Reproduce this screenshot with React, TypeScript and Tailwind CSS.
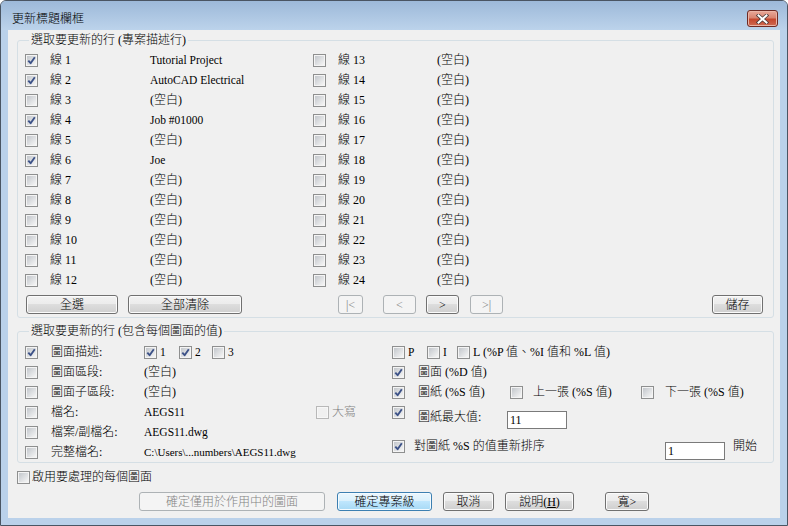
import type { ReactNode } from "react";

const FONT = "font-['Liberation_Serif','Noto_Sans_CJK_TC',serif]";

type Line = { label: string; value: string; checked?: boolean };

const leftLines: Line[] = [
  { label: "線 1", value: "Tutorial Project", checked: true },
  { label: "線 2", value: "AutoCAD Electrical", checked: true },
  { label: "線 3", value: "(空白)" },
  { label: "線 4", value: "Job #01000", checked: true },
  { label: "線 5", value: "(空白)" },
  { label: "線 6", value: "Joe", checked: true },
  { label: "線 7", value: "(空白)" },
  { label: "線 8", value: "(空白)" },
  { label: "線 9", value: "(空白)" },
  { label: "線 10", value: "(空白)" },
  { label: "線 11", value: "(空白)" },
  { label: "線 12", value: "(空白)" },
];

const rightLines: Line[] = Array.from({ length: 12 }, (_, i) => ({
  label: `線 ${i + 13}`,
  value: "(空白)",
}));

/** Win7 style 13px checkbox. */
function Check(props: { checked?: boolean; disabled?: boolean }) {
  return (
    <span
      className={
        props.disabled
          ? "inline-flex size-[13px] shrink-0 items-center justify-center border border-[#b8b8b8] bg-[#f7f7f7]"
          : "inline-flex size-[13px] shrink-0 items-center justify-center border border-[#8e8f8f] bg-[#f4f4f4]"
      }
    >
      <span
        className={
          props.disabled
            ? "flex size-[9px] items-center justify-center bg-[#f0f0f0]"
            : "flex size-[9px] items-center justify-center bg-gradient-to-br from-[#c3c7cc] to-[#f6f6f6]"
        }
      >
        {props.checked && (
          <svg width="9" height="9" viewBox="0 0 9 9" className="overflow-visible">
            <path
              d="M1.3 4.6 L3.6 7.2 L7.8 1.2"
              fill="none"
              stroke="#3d5288"
              strokeWidth="1.9"
              strokeLinejoin="round"
            />
          </svg>
        )}
      </span>
    </span>
  );
}

function Btn(props: {
  w: string;
  children: ReactNode;
  disabled?: boolean;
  primary?: boolean;
  className?: string;
}) {
  const look = props.disabled
    ? "border-[#adb2b5] bg-[#f4f4f4] text-[#838383]"
    : props.primary
      ? "border-[#3c7fb1] bg-[linear-gradient(#eaf6fd_0%,#d9f0fc_50%,#bee6fd_50%,#a7d9f5_100%)] shadow-[inset_0_0_0_1px_#f4fbff]"
      : "border-[#707070] bg-[linear-gradient(#f2f2f2_0%,#ebebeb_50%,#dddddd_50%,#cfcfcf_100%)] shadow-[inset_0_0_0_1px_#fbfbfb]";
  return (
    <button
      type="button"
      className={`flex h-[19px] shrink-0 items-center justify-center rounded-[3px] border text-[12px] leading-none ${look} ${props.w} ${props.className ?? ""}`}
    >
      {props.children}
    </button>
  );
}

function LineRow(props: { line: Line; labelW: string }) {
  const latin = !props.line.value.startsWith("(");
  return (
    <div className="flex h-[20px] items-center">
      <Check checked={props.line.checked} />
      <span className={`ml-[12px] ${props.labelW}`}>{props.line.label}</span>
      <span className={latin ? "text-[11.5px]" : ""}>{props.line.value}</span>
    </div>
  );
}

function FieldRow(props: { label: string; checked?: boolean; children: ReactNode }) {
  return (
    <div className="flex h-[20px] items-center">
      <Check checked={props.checked} />
      <span className="ml-[13px] w-[93px]">{props.label}</span>
      {props.children}
    </div>
  );
}

export default function App() {
  return (
    <div className={`h-[526px] w-[788px] bg-white text-[12px] font-light leading-[16px] text-black ${FONT}`}>
      <div className="flex h-full w-full flex-col rounded-t-[6px] border border-[#4a5563] bg-[#bad1ea]">
        {/* Title bar */}
        <div className="flex h-[29px] shrink-0 items-start justify-between rounded-t-[5px] bg-gradient-to-b from-[#9db9d9] to-[#bcd3eb] pl-[11px] pr-[9px]">
          <span className="pt-[10px] text-[12px] leading-[16px]">更新標題欄框</span>
          <button
            type="button"
            aria-label="Close"
            className="mt-[9px] flex h-[17px] w-[31px] items-center justify-center rounded-[3px] border border-[#6e2a24] bg-[linear-gradient(#e9a99a_0%,#d98470_45%,#c5472e_55%,#cf6a52_100%)] shadow-[inset_0_0_0_1px_#eab4a6]"
          >
            <svg width="13" height="10" viewBox="0 0 13 10">
              <path d="M2.5 1.5 L10.5 8.5 M10.5 1.5 L2.5 8.5" stroke="#4a3a3a" strokeWidth="3.6" strokeLinecap="square" />
              <path d="M2.5 1.5 L10.5 8.5 M10.5 1.5 L2.5 8.5" stroke="#ffffff" strokeWidth="2" strokeLinecap="square" />
            </svg>
          </button>
        </div>

        {/* Client area */}
        <div className="mx-[7px] flex h-[488px] w-[772px] flex-col bg-[#f0f0f0] pl-[9px] pt-[2px]">
          {/* Group 1 */}
          <fieldset className="w-[757px] rounded-[3px] border border-[#d5dfe5] pb-[3px] pl-[7px] pt-[2px]">
            <legend className="ml-[4px] px-[2px] leading-[16px]">選取要更新的行 (專案描述行)</legend>
            <div className="flex">
              <div className="flex w-[288px] flex-col">
                {leftLines.map((l) => (
                  <LineRow key={l.label} line={l} labelW="w-[100px]" />
                ))}
              </div>
              <div className="flex flex-col">
                {rightLines.map((l) => (
                  <LineRow key={l.label} line={l} labelW="w-[99px]" />
                ))}
              </div>
            </div>
            <div className="mt-[5px] flex">
              <Btn w="w-[92px]" className="ml-[1px]">全選</Btn>
              <Btn w="w-[114px]" className="ml-[10px]">全部清除</Btn>
              <Btn w="w-[25px]" className="ml-[96px] text-[10px]" disabled>|&lt;</Btn>
              <Btn w="w-[33px]" className="ml-[20px] text-[10px]" disabled>&lt;</Btn>
              <Btn w="w-[33px]" className="ml-[10px] text-[10px]">&gt;</Btn>
              <Btn w="w-[33px]" className="ml-[11px] text-[10px]" disabled>&gt;|</Btn>
              <Btn w="w-[51px]" className="ml-[209px]">儲存</Btn>
            </div>
          </fieldset>

          {/* Group 2 */}
          <fieldset className="mt-[5px] w-[757px] rounded-[3px] border border-[#d5dfe5] pl-[7px] pt-[3px]">
            <legend className="ml-[4px] px-[2px] leading-[16px]">選取要更新的行 (包含每個圖面的值)</legend>
            <div className="flex">
              <div className="flex w-[367px] flex-col">
                <FieldRow label="圖面描述:" checked>
                  <span className="flex w-[35px] items-center">
                    <Check checked />
                    <span className="ml-[3px] text-[11.5px]">1</span>
                  </span>
                  <span className="flex w-[33px] items-center">
                    <Check checked />
                    <span className="ml-[3px] text-[11.5px]">2</span>
                  </span>
                  <span className="flex items-center">
                    <Check />
                    <span className="ml-[3px] text-[11.5px]">3</span>
                  </span>
                </FieldRow>
                <FieldRow label="圖面區段:">
                  <span>(空白)</span>
                </FieldRow>
                <FieldRow label="圖面子區段:">
                  <span>(空白)</span>
                </FieldRow>
                <FieldRow label="檔名:">
                  <span className="w-[172px] text-[11.5px]">AEGS11</span>
                  <Check disabled />
                  <span className="ml-[3px] text-[#838383]">大寫</span>
                </FieldRow>
                <FieldRow label="檔案/副檔名:">
                  <span className="text-[11.5px]">AEGS11.dwg</span>
                </FieldRow>
                <FieldRow label="完整檔名:">
                  <span className="text-[11px]">C:\Users\...numbers\AEGS11.dwg</span>
                </FieldRow>
              </div>

              <div className="flex flex-col">
                <div className="flex h-[20px] items-center">
                  <span className="flex w-[35px] items-center">
                    <Check />
                    <span className="ml-[3px] text-[11.5px]">P</span>
                  </span>
                  <span className="flex w-[30px] items-center">
                    <Check />
                    <span className="ml-[3px] text-[11.5px]">I</span>
                  </span>
                  <span className="flex items-center">
                    <Check />
                    <span className="ml-[3px]">L (%P 值、%I 值和 %L 值)</span>
                  </span>
                </div>
                <div className="flex h-[20px] items-center">
                  <Check checked />
                  <span className="ml-[13px]">圖面 (%D 值)</span>
                </div>
                <div className="flex h-[20px] items-center">
                  <Check checked />
                  <span className="ml-[13px] w-[92px]">圖紙 (%S 值)</span>
                  <Check />
                  <span className="ml-[10px] w-[108px]">上一張 (%S 值)</span>
                  <Check />
                  <span className="ml-[11px]">下一張 (%S 值)</span>
                </div>
                <div className="flex h-[28px] items-start">
                  <span className="mt-[4px] flex">
                    <Check checked />
                  </span>
                  <span className="ml-[13px] mt-[7px] w-[89px]">圖紙最大值:</span>
                  <input
                    readOnly
                    defaultValue="11"
                    className="mt-[9px] h-[18px] w-[60px] border border-[#7a7a7a] bg-white pl-[2px] text-[12px] leading-[16px] outline-none"
                  />
                </div>
                <div className="flex h-[32px] items-start">
                  <span className="mt-[10px] flex">
                    <Check checked />
                  </span>
                  <span className="ml-[9px] mt-[8px] w-[251px]">對圖紙 %S 的值重新排序</span>
                  <input
                    readOnly
                    defaultValue="1"
                    className="mt-[12px] h-[18px] w-[60px] border border-[#7a7a7a] bg-white pl-[2px] text-[12px] leading-[16px] outline-none"
                  />
                  <span className="ml-[8px] mt-[8px]">開始</span>
                </div>
              </div>
            </div>
          </fieldset>

          <div className="mt-[4px] flex h-[20px] items-center">
            <Check />
            <span className="ml-[2px]">啟用要處理的每個圖面</span>
          </div>

          <div className="mt-[5px] flex">
            <Btn w="w-[186px]" className="ml-[122px]" disabled>確定僅用於作用中的圖面</Btn>
            <Btn w="w-[95px]" className="ml-[12px]" primary>確定專案級</Btn>
            <Btn w="w-[51px]" className="ml-[11px]">取消</Btn>
            <Btn w="w-[69px]" className="ml-[11px]">
              說明(<span className="underline">H</span>)
            </Btn>
            <Btn w="w-[44px]" className="ml-[31px]">寬&gt;</Btn>
          </div>
        </div>
      </div>
    </div>
  );
}
